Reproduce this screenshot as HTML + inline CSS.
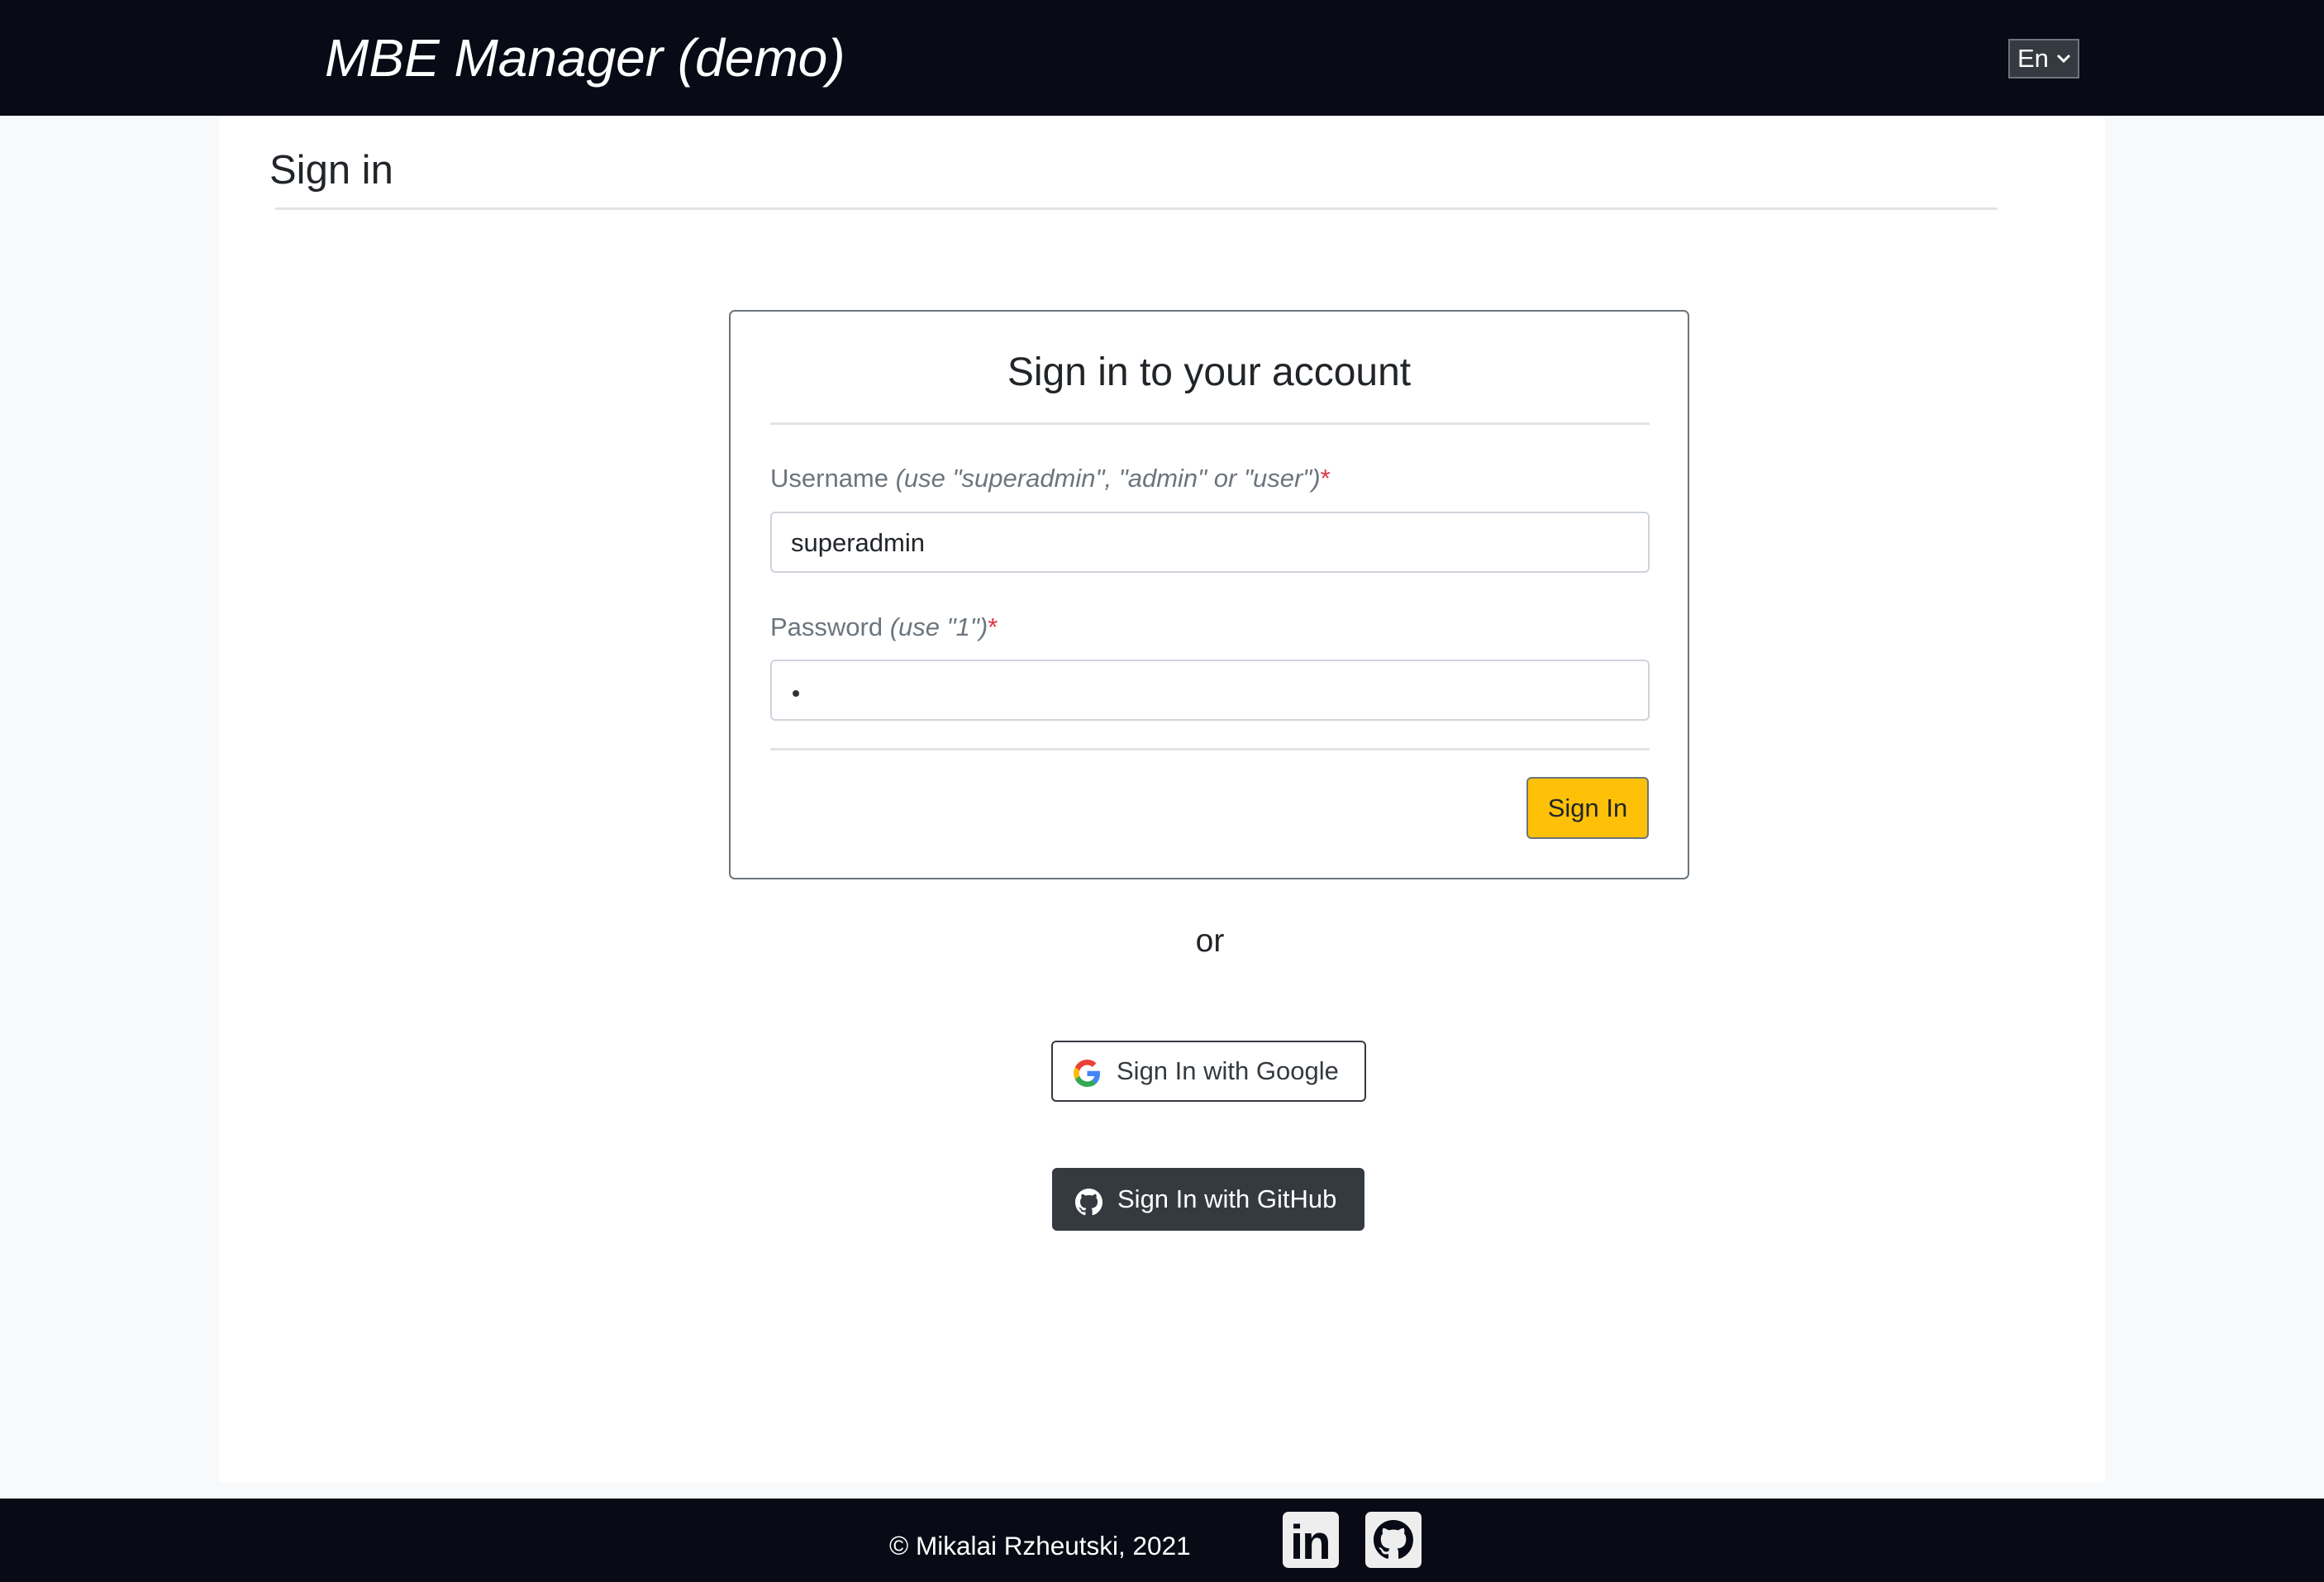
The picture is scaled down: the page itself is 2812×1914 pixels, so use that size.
<!DOCTYPE html>
<html><head><meta charset="utf-8"><style>
*{margin:0;padding:0;box-sizing:border-box}
body{width:2812px;height:1914px;background:#f8f9fa;font-family:"Liberation Sans",Arial,sans-serif;position:relative;overflow:hidden;color:#212529}
.a{position:absolute}
#hdr{left:0;top:0;width:2812px;height:140px;background:#080a15}
#title{left:393px;top:30px;font-size:64px;font-style:italic;color:#fff;line-height:80px;white-space:nowrap}
#lang{left:2430px;top:47px;width:86px;height:48px;background:#343a40;border:2px solid #6c757d;color:#fff;font-size:31px;line-height:44px;padding-left:9px}
#main{left:265px;top:140px;width:2282px;height:1653px;background:#fff}
.t{white-space:nowrap;line-height:1}
.hr{height:3px;background:#e3e3e3}
#card{left:882px;top:375px;width:1162px;height:689px;border:2px solid #6c757d;border-radius:7px;background:#fff}
.lbl{font-size:31px;color:#6c757d}
.inp{left:932px;width:1064px;height:74px;border:2px solid #ced4da;border-radius:6px;background:#fff}
#foot{left:0;top:1813px;width:2812px;height:101px;background:#080a15}
</style></head><body>
<div id="hdr" class="a"></div>
<div id="title" class="a">MBE Manager (demo)</div>
<div id="lang" class="a">En<svg style="position:absolute;left:56px;top:15px" width="18" height="14" viewBox="0 0 18 14"><path d="M2 3l7 7 7-7" stroke="#fff" stroke-width="3" fill="none"/></svg></div>
<div id="main" class="a"></div>
<div class="a t" style="left:326px;top:182px;font-size:49px">Sign in</div>
<div class="a hr" style="left:333px;top:251px;width:2084px"></div>
<div id="card" class="a"></div>
<div class="a t" style="left:882px;width:1162px;text-align:center;top:427px;font-size:48px">Sign in to your account</div>
<div class="a hr" style="left:932px;top:511px;width:1064px"></div>
<div class="a t lbl" style="left:932px;top:563px">Username <i>(use "superadmin", "admin" or "user")</i><span style="color:#dc3545">*</span></div>
<div class="a inp" style="top:619px"></div>
<div class="a t" style="left:957px;top:641px;font-size:31px">superadmin</div>
<div class="a t lbl" style="left:932px;top:743px">Password <i>(use "1")</i><span style="color:#dc3545">*</span></div>
<div class="a inp" style="top:798px"></div>
<div class="a" style="left:959px;top:835px;width:8px;height:8px;border-radius:50%;background:#333"></div>
<div class="a hr" style="left:932px;top:905px;width:1064px"></div>
<div class="a" style="left:1847px;top:940px;width:148px;height:75px;background:#ffc107;border:2px solid #6c757d;border-radius:6px;font-size:31px;text-align:center;line-height:71px">Sign In</div>
<div class="a t" style="left:1400px;width:128px;text-align:center;top:1119px;font-size:39px">or</div>
<div class="a" style="left:1272px;top:1259px;width:381px;height:74px;border:2px solid #343a40;border-radius:6px;background:#fff"></div>
<svg class="a" style="left:1299px;top:1282px" width="33" height="33" viewBox="0 0 48 48"><path fill="#EA4335" d="M24 9.5c3.5 0 6.6 1.2 9.1 3.6l6.8-6.8C35.8 2.4 30.3 0 24 0 14.6 0 6.6 5.4 2.7 13.3l7.9 6.2C12.5 13.7 17.8 9.5 24 9.5z"/><path fill="#4285F4" d="M46.5 24.5c0-1.6-.1-3.1-.4-4.5H24v9h12.7c-.6 2.9-2.200 5.4-4.7 7.1l7.7 6C44.1 38 46.5 31.8 46.5 24.5z"/><path fill="#FBBC05" d="M10.5 28.6c-.5-1.4-.8-3-.8-4.6s.3-3.2.8-4.6l-7.9-6.2C1 16.5 0 20.1 0 24s1 7.5 2.7 10.7l7.8-6.1z"/><path fill="#34A853" d="M24 48c6.5 0 11.9-2.1 15.9-5.8l-7.7-6c-2.2 1.5-5 2.3-8.2 2.3-6.2 0-11.5-4.2-13.4-9.9l-7.9 6.1C6.6 42.6 14.6 48 24 48z"/></svg>
<div class="a t" style="left:1351px;top:1280px;font-size:31px;color:#343a40">Sign In with Google</div>
<div class="a" style="left:1273px;top:1413px;width:378px;height:76px;background:#343a40;border-radius:6px"></div>
<svg class="a" style="left:1301px;top:1438px" width="33" height="33" viewBox="0 0 16 16"><path fill="#fff" d="M8 0C3.58 0 0 3.58 0 8c0 3.540 2.29 6.53 5.47 7.59.4.07.55-.17.55-.38 0-.19-.01-.82-.01-1.49-2.01.37-2.530-.49-2.69-.94-.09-.23-.48-.94-.82-1.13-.28-.15-.68-.52-.01-.53.63-.01 1.08.58 1.23.82.72 1.21 1.87.87 2.33.66.07-.52.28-.87.51-1.07-1.78-.2-3.64-.89-3.64-3.95 0-.87.31-1.59.82-2.15-.08-.2-.36-1.02.08-2.12 0 0 .67-.21 2.2.82.64-.18 1.32-.27 2-.27.68 0 1.36.09 2 .27 1.53-1.04 2.2-.82 2.2-.82.44 1.1.16 1.92.08 2.12.51.56.82 1.27.82 2.15 0 3.07-1.87 3.75-3.65 3.95.29.25.54.73.54 1.48 0 1.07-.01 1.93-.01 2.2 0 .21.15.46.55.38A8.013 8.013 0 0016 8c0-4.42-3.58-8-8-8z"/></svg>
<div class="a t" style="left:1352px;top:1435px;font-size:31px;color:#fff">Sign In with GitHub</div>
<div id="foot" class="a"></div>
<div class="a t" style="left:1076px;top:1855px;font-size:31.5px;color:#fff">© Mikalai Rzheutski, 2021</div>
<div class="a" style="left:1552px;top:1829px;width:68px;height:68px;background:#eee;border-radius:7px"></div>
<div class="a t" style="left:1561px;top:1838px;font-size:58px;font-weight:bold;color:#080a15;letter-spacing:-2px">in</div>
<div class="a" style="left:1652px;top:1829px;width:68px;height:68px;background:#eee;border-radius:7px"></div>
<svg class="a" style="left:1662px;top:1839px" width="48" height="48" viewBox="0 0 16 16"><path fill="#080a15" d="M8 0C3.58 0 0 3.58 0 8c0 3.54 2.29 6.53 5.47 7.59.4.07.55-.17.55-.38 0-.19-.01-.82-.01-1.49-2.01.37-2.53-.49-2.69-.94-.09-.23-.48-.94-.82-1.13-.28-.15-.68-.52-.01-.53.63-.01 1.08.58 1.23.82.72 1.21 1.87.87 2.33.66.07-.52.28-.87.51-1.07-1.78-.2-3.64-.89-3.64-3.95 0-.87.31-1.59.82-2.15-.08-.2-.36-1.02.08-2.12 0 0 .67-.21 2.2.82.64-.18 1.32-.27 2-.27.68 0 1.36.09 2 .27 1.53-1.04 2.2-.82 2.2-.82.44 1.1.16 1.92.08 2.12.51.56.82 1.27.82 2.15 0 3.07-1.87 3.75-3.65 3.95.29.25.54.73.54 1.48 0 1.07-.01 1.930-.01 2.2 0 .21.15.46.55.38A8.013 8.013 0 0016 8c0-4.42-3.58-8-8-8z"/></svg>
</body></html>
